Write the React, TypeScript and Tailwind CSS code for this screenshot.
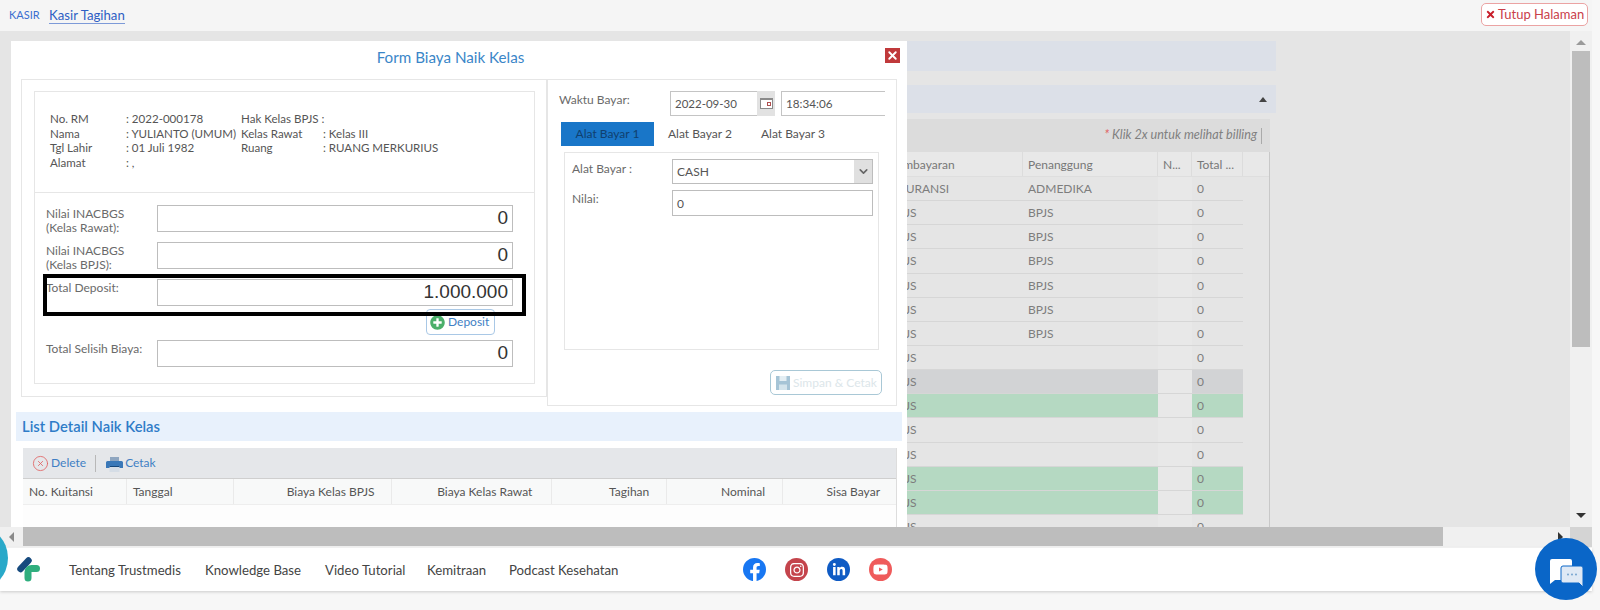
import React from "react"
import { CircleX, X, ChevronDown } from "lucide-react"
import { FaFacebookF, FaInstagram, FaLinkedinIn, FaYoutube, FaPlusCircle, FaTimes } from "react-icons/fa"

const billRows = [
  { bayar: "ASURANSI", tanggung: "ADMEDIKA", tone: "" },
  { bayar: "BPJS", tanggung: "BPJS", tone: "" },
  { bayar: "BPJS", tanggung: "BPJS", tone: "" },
  { bayar: "BPJS", tanggung: "BPJS", tone: "" },
  { bayar: "BPJS", tanggung: "BPJS", tone: "" },
  { bayar: "BPJS", tanggung: "BPJS", tone: "" },
  { bayar: "BPJS", tanggung: "BPJS", tone: "" },
  { bayar: "BPJS", tanggung: "", tone: "" },
  { bayar: "BPJS", tanggung: "", tone: "grey" },
  { bayar: "BPJS", tanggung: "", tone: "green" },
  { bayar: "BPJS", tanggung: "", tone: "" },
  { bayar: "BPJS", tanggung: "", tone: "" },
  { bayar: "BPJS", tanggung: "", tone: "green" },
  { bayar: "BPJS", tanggung: "", tone: "green" },
  { bayar: "BPJS", tanggung: "", tone: "" },
]

const footerLinks = [
  { label: "Tentang Trustmedis", cls: "w-[136px]" },
  { label: "Knowledge Base", cls: "w-[120px]" },
  { label: "Video Tutorial", cls: "w-[102px]" },
  { label: "Kemitraan", cls: "w-[82px]" },
  { label: "Podcast Kesehatan", cls: "w-[130px]" },
]

function MoneyRow({ label, value }: { label: React.ReactNode; value: string }) {
  return (
    <div className="flex h-[27px]">
      <div className="w-[111px] pt-[2px] text-[12px] leading-[14px] text-[#6a6a6a]">{label}</div>
      <div className="w-[356px] h-[27px] border border-[#bdbdbd] bg-white flex items-center justify-end pr-[4px] font-['Liberation_Sans',sans-serif] text-[19px] text-[#333]">
        {value}
      </div>
    </div>
  )
}

function BackgroundPanels() {
  return (
    <div className="ml-[885px] w-[391px] pt-[10px]">
      <div className="h-[30px] bg-[#dce0e8] ml-[22px]"></div>
      <div className="h-[28px] mt-[14px] bg-[#dce0e8] ml-[22px] flex items-center justify-end pr-[9px]">
        <div className="w-0 h-0 border-x-[4px] border-x-transparent border-b-[5px] border-b-[#444]"></div>
      </div>
      <div className="mt-[6px] w-[385px] h-[33px] bg-[#dcdcdc] flex items-center justify-end pr-[8px]">
        <span className="text-[12.6px] italic text-[#808080]"><span className="text-[#e06060]">* </span>Klik 2x untuk melihat billing</span>
        <span className="ml-[4px] w-px h-[16px] bg-[#aaa]"></span>
      </div>
      <div className="w-[385px] h-[376px] overflow-hidden border-r border-[#c8c8c8]">
        <div className="flex h-[25px] items-center text-[12px] text-[#777] bg-[#e8e8e8] border-b border-[#dedede]">
          <div className="w-[138px] pl-[5px] border-r border-[#dcdcdc] h-full leading-[25px]">Pembayaran</div>
          <div className="w-[135px] pl-[5px] border-r border-[#dcdcdc] h-full leading-[25px]">Penanggung</div>
          <div className="w-[34px] pl-[5px] border-r border-[#dcdcdc] h-full leading-[25px]">N...</div>
          <div className="w-[51px] pl-[5px] border-r border-[#dcdcdc] h-full leading-[25px]">Total ...</div>
        </div>
        {billRows.map((r, i) => {
          const tone = r.tone === "grey" ? "bg-[#d2d3d5]" : r.tone === "green" ? "bg-[#b5d9c2]" : ""
          return (
            <div key={i} className="flex h-[24.15px] w-[358px] text-[12px] leading-[24px] text-[#7d7d7d] border-b border-[#d6d6d6]">
              <div className={`w-[138px] pl-[6px] ${tone}`}>{r.bayar}</div>
              <div className={`w-[135px] pl-[5px] ${tone}`}>{r.tanggung}</div>
              <div className="w-[34px] bg-[#e8e8e8]"></div>
              <div className={`w-[51px] pl-[5px] ${tone}`}>0</div>
            </div>
          )
        })}
      </div>
    </div>
  )
}

function Modal() {
  return (
    <div className="absolute left-[11px] top-[10px] w-[896px] h-[500px] bg-white text-[#555]">
      <div className="relative h-[38px] flex items-center justify-center text-[15.2px] text-[#3a86c8] pb-[6px] pr-[17px]">
        Form Biaya Naik Kelas
        <div className="absolute right-[7px] top-[7px] w-[15px] h-[15px] bg-[#c0393b] flex items-center justify-center">
          <X size={13} strokeWidth={3.5} color="#fff" />
        </div>
      </div>

      <div className="flex items-start ml-[10px]">
        {/* kiri */}
        <div className="relative w-[526px] h-[318px] border border-[#e6e6e6] pl-[12px] pt-[11px]">
          <div className="w-[501px] h-[102px] border border-[#e6e6e6] pt-[20px] pl-[15px] text-[11.55px] leading-[14.7px] text-[#555]">
            <div className="flex"><span className="w-[76px]">No. RM</span><span className="w-[115px]">: 2022-000178</span><span>Hak Kelas BPJS :</span></div>
            <div className="flex"><span className="w-[76px]">Nama</span><span className="w-[115px] whitespace-nowrap">: YULIANTO (UMUM)</span><span className="w-[82px]">Kelas Rawat</span><span>: Kelas III</span></div>
            <div className="flex"><span className="w-[76px]">Tgl Lahir</span><span className="w-[115px]">: 01 Juli 1982</span><span className="w-[82px]">Ruang</span><span>: RUANG MERKURIUS</span></div>
            <div className="flex"><span className="w-[76px]">Alamat</span><span>: ,</span></div>
          </div>
          <div className="w-[501px] h-[191px] border border-t-0 border-[#e6e6e6] pl-[11px] pt-[12px]">
            <MoneyRow label={<>Nilai INACBGS<br />(Kelas Rawat):</>} value="0" />
            <div className="mt-[10px]"><MoneyRow label={<>Nilai INACBGS<br />(Kelas BPJS):</>} value="0" /></div>
            <div className="mt-[10px]"><MoneyRow label="Total Deposit:" value="1.000.000" /></div>
            <div className="mt-[3px] ml-[380px] w-[69px] h-[26px] border border-[#a9c8e6] rounded-[4px] flex items-center pl-[3px] gap-[3px] text-[12px] text-[#3f7fc4]">
              <FaPlusCircle size={15} color="#4caf6a" />
              Deposit
            </div>
            <div className="mt-[5px]"><MoneyRow label="Total Selisih Biaya:" value="0" /></div>
          </div>
          {/* kotak anotasi */}
          <div className="absolute left-[21px] top-[194px] w-[483px] h-[42px] border-[4px] border-black"></div>
        </div>

        {/* kanan */}
        <div className="w-[350px] h-[327px] border border-[#e6e6e6] pl-[11px] pt-[11px]">
          <div className="flex">
            <div className="w-[111px] text-[12px] text-[#6a6a6a]">Waktu Bayar:</div>
            <div className="w-[87px] h-[25px] border-l border-y border-[#c4c4c4] pl-[4px] pt-[1px] text-[11.5px] leading-[22px] text-[#555]">2022-09-30</div>
            <div className="w-[18px] h-[25px] bg-[#e2e2e2] flex items-center justify-center">
              <div className="w-[13px] h-[11px] border border-[#8a8a8a] border-t-2 bg-white flex justify-end items-center pr-px">
                <div className="w-[4px] h-[4px] border border-[#b05050]"></div>
              </div>
            </div>
            <div className="ml-[6px] w-[104px] h-[25px] border-l border-y border-[#c4c4c4] pl-[4px] text-[11.7px] leading-[23px] text-[#555]">18:34:06</div>
          </div>
          <div className="flex mt-[6px] ml-[2px] text-[12px] h-[24px] leading-[24px]">
            <div className="w-[93px] bg-[#1976c8] text-center text-[#10406f]">Alat Bayar 1</div>
            <div className="w-[93px] pl-[14px] text-[#555]">Alat Bayar 2</div>
            <div className="w-[93px] pl-[14px] text-[#555]">Alat Bayar 3</div>
          </div>
          <div className="mt-[6px] ml-[5px] w-[315px] h-[198px] border border-[#e6e6e6] pl-[7px] pt-[6px] text-[12px] text-[#6a6a6a]">
            <div className="flex">
              <div className="w-[100px] pt-[1px]">Alat Bayar :</div>
              <div className="w-[201px] h-[25px] border border-[#bdbdbd] flex items-center justify-between pl-[4px] text-[#555]">
                <span className="mt-[1px]">CASH</span>
                <div className="w-[18px] h-full bg-[#e0e0e0] flex items-center justify-center">
                  <ChevronDown size={13} strokeWidth={3} color="#666" />
                </div>
              </div>
            </div>
            <div className="flex mt-[6px]">
              <div className="w-[100px]">Nilai:</div>
              <div className="w-[201px] h-[26px] border border-[#bdbdbd] pl-[4px] leading-[25px] text-[#555]">0</div>
            </div>
          </div>
          <div className="mt-[20px] ml-[211px] w-[112px] h-[25px] border border-[#a9c8d6] rounded-[5px] flex items-center pl-[5px] gap-[3px] text-[12px] text-[#dce6ea]">
            <svg width="14" height="14" viewBox="0 0 14 14" className="shrink-0">
              <path d="M0 0h14v14h-14z" fill="#a6c4d6" />
              <path d="M3.5 0h7v5h-7z" fill="#e4eef3" />
              <path d="M3 8.5h8v5.5h-8z" fill="#d4e4ec" />
            </svg>
            Simpan &amp; Cetak
          </div>
        </div>
      </div>

      <div className="mt-[-22px] ml-[5px] w-[886px]">
        <div className="mt-[28px] h-[29px] bg-[#e8f1fc] pl-[6px] text-[14.8px] font-semibold leading-[28px] text-[#2f7cc8]">List Detail Naik Kelas</div>
        <div className="mt-[7px] ml-[7px] w-[874px] border-r border-[#ddd]">
          <div className="h-[31px] bg-[#e5e7ea] border-b border-[#cfcfcf] flex items-center pl-[9px] text-[12px] text-[#3f7fc4]">
            <CircleX size={17} strokeWidth={1.2} color="#e06464" />
            <span className="ml-[2px]">Delete</span>
            <span className="ml-[9px] w-px h-[17px] bg-[#b8b8b8]"></span>
            <svg width="17" height="15" viewBox="0 0 17 15" className="ml-[10px] mt-[2px] shrink-0">
              <path d="M4 0h9v4h-9z" fill="#8fa6c0" />
              <path d="M1.5 4h14a1.5 1.5 0 0 1 1.5 1.5v5.5h-17v-5.5a1.5 1.5 0 0 1 1.5 -1.5z" fill="#3a78b8" />
              <path d="M3.5 9h10v6h-10z" fill="#d5dde6" />
              <path d="M3.5 9h10v1h-10z" fill="#16477a" />
            </svg>
            <span className="ml-[2px]">Cetak</span>
          </div>
          <div className="flex h-[26px] leading-[25px] text-[12px] text-[#555] bg-[#f8f9f9] border-b border-[#eeeeee]">
            <div className="w-[104px] pl-[6px] border-r border-[#eaeaea]">No. Kuitansi</div>
            <div className="w-[107px] pl-[6px] border-r border-[#eaeaea]">Tanggal</div>
            <div className="w-[158px] pr-[16px] text-right border-r border-[#eaeaea]">Biaya Kelas BPJS</div>
            <div className="w-[161px] pr-[19px] text-right border-r border-[#eaeaea]">Biaya Kelas Rawat</div>
            <div className="w-[115px] pr-[17px] text-right border-r border-[#eaeaea]">Tagihan</div>
            <div className="w-[116px] pr-[17px] text-right border-r border-[#eaeaea]">Nominal</div>
            <div className="w-[113px] pr-[16px] text-right">Sisa Bayar</div>
          </div>
          <div className="h-[30px] bg-[#fdfdfd]"></div>
        </div>
      </div>
    </div>
  )
}

export default function App() {
  return (
    <div className="relative w-[1600px] h-[610px] overflow-hidden bg-[#f7f7f7] font-['Lato','Noto_Sans',sans-serif]">
      <div className="w-[1592px]">
        {/* top bar */}
        <div className="h-[31px] bg-[#f5f5f5] flex items-start justify-between pr-[4px] pl-[9px]">
          <div className="flex items-start pt-[7px]">
            <span className="text-[11px] text-[#3a6fd0] w-[40px]">KASIR</span>
            <span className="text-[13.2px] text-[#2f5fc4] border-b border-[#7d9ad8] leading-[16px]">Kasir Tagihan</span>
          </div>
          <div className="mt-[3px] w-[107px] h-[23px] border border-[#eba3a3] rounded-[5px] bg-white flex items-center pl-[3px] gap-[2px] text-[13px] text-[#c9404a]">
            <FaTimes size={11} color="#c81e2a" />
            Tutup Halaman
          </div>
        </div>

        {/* content */}
        <div className="flex h-[496px]">
          <div className="relative w-[1570px] h-full overflow-hidden bg-[#e5e5e5]">
            <BackgroundPanels />
            <Modal />
          </div>
          <div className="w-[22px] h-full bg-[#f0f0f0] flex flex-col items-center pt-[9px]">
            <div className="w-0 h-0 border-x-[5px] border-x-transparent border-b-[5px] border-b-[#9a9a9a]"></div>
            <div className="mt-[6px] w-[18px] h-[296px] bg-[#bdbdbd]"></div>
            <div className="mt-auto mb-[9px] w-0 h-0 border-x-[5px] border-x-transparent border-t-[5px] border-t-[#333]"></div>
          </div>
        </div>

        {/* horizontal scrollbar */}
        <div className="flex h-[20px] bg-[#f0f0f0]">
          <div className="w-[23px] flex items-center justify-center">
            <div className="w-0 h-0 border-y-[5px] border-y-transparent border-r-[5px] border-r-[#8a8a8a]"></div>
          </div>
          <div className="w-[1420px] h-[19px] bg-[#bdbdbd]"></div>
          <div className="w-[127px] flex items-center justify-end pr-[7px]">
            <div className="w-0 h-0 border-y-[5px] border-y-transparent border-l-[5px] border-l-[#333]"></div>
          </div>
          <div className="w-[22px] bg-[#d4d4d4]"></div>
        </div>

        {/* footer */}
        <div className="mt-px h-[43px] bg-white shadow-[0_1px_3px_rgba(0,0,0,0.18)] flex items-center pl-[17px]">
          <svg width="23" height="25" viewBox="0 0 23 25" className="shrink-0">
            <path d="M11.5 3.5L3.5 12" stroke="#164a7e" strokeWidth="6.5" strokeLinecap="round" fill="none" />
            <path d="M19.5 11.5h-5a3.5 3.5 0 0 0 -3.5 3.5v6" stroke="#2fae7e" strokeWidth="7" strokeLinecap="round" fill="none" />
          </svg>
          <div className="ml-[29px] pt-[2px] flex text-[13.2px] text-[#444] whitespace-nowrap">
            {footerLinks.map((l) => (
              <span key={l.label} className={l.cls}>{l.label}</span>
            ))}
          </div>
          <div className="ml-[104px] flex gap-[19px]">
            <span className="w-[23px] h-[23px] rounded-full bg-[#1877f2] flex items-end justify-center"><FaFacebookF size={18} color="#fff" /></span>
            <span className="w-[23px] h-[23px] rounded-full bg-[#c4444c] flex items-center justify-center"><FaInstagram size={16} color="#fff" /></span>
            <span className="w-[23px] h-[23px] rounded-full bg-[#0f5bc4] flex items-center justify-center"><FaLinkedinIn size={14} color="#fff" /></span>
            <span className="w-[23px] h-[23px] rounded-full bg-[#ef5b5b] flex items-center justify-center"><FaYoutube size={15} color="#fff" /></span>
          </div>
        </div>
      </div>

      {/* floating circles */}
      <div className="absolute left-[-58px] top-[525px] w-[66px] h-[66px] rounded-full bg-[#29a9c9]"></div>
      <div className="absolute left-[1535px] top-[538px] w-[62px] h-[62px] rounded-full bg-[#0a66c8] flex items-center justify-center pt-[8px]">
        <svg width="33" height="28" viewBox="0 0 33 28">
          <path d="M2 0h18a2 2 0 0 1 2 2v17a2 2 0 0 1 -2 2h-15l-5 4v-23a2 2 0 0 1 2 -2z" fill="#fff" />
          <path d="M13 7h18a2 2 0 0 1 2 2v19l-4 -4h-16a2 2 0 0 1 -2 -2v-13a2 2 0 0 1 2 -2z" fill="#dfe9f5" stroke="#0a66c8" strokeWidth="1" />
          <circle cx="18" cy="15.5" r="0.9" fill="#6b9ccc" /><circle cx="22" cy="15.5" r="0.9" fill="#6b9ccc" /><circle cx="26" cy="15.5" r="0.9" fill="#6b9ccc" />
        </svg>
      </div>
    </div>
  )
}
